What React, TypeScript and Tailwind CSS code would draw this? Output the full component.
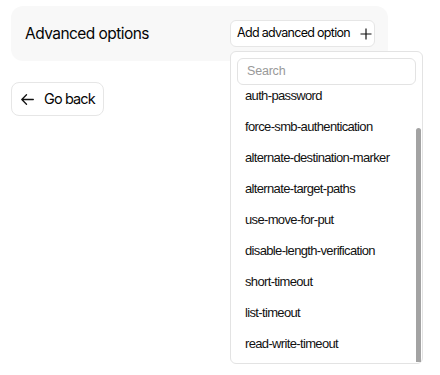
import React from "react";

const items = [
  "auth-password",
  "force-smb-authentication",
  "alternate-destination-marker",
  "alternate-target-paths",
  "use-move-for-put",
  "disable-length-verification",
  "short-timeout",
  "list-timeout",
  "read-write-timeout",
];

export default function App() {
  return (
    <div className="w-[440px] h-[375px] bg-white relative" style={{ fontFamily: "Inter, 'Liberation Sans', sans-serif" }}>
      <div className="pt-[6px] pl-[11px]">
        <div className="w-[377px] h-[55px] rounded-xl bg-[#f8f8f8] flex items-center justify-between pl-[14px] pr-[13px]">
          <span className="text-[15.5px] text-[#050505] tracking-[-0.55px] pt-[1px]">Advanced options</span>
          <div className="relative">
            <button className="w-[145px] h-[27px] flex items-center pl-[6px] bg-white border border-[#e6e6e6] rounded-md text-[12.5px] text-[#050505] tracking-[-0.7px]">
              <span>Add advanced option</span>
              <svg className="ml-[10px]" width="12" height="12" viewBox="0 0 12 12" fill="none" stroke="#111" strokeWidth="1.2">
                <path d="M6 0.5V11.5M0.5 6H11.5" />
              </svg>
            </button>
            <div className="absolute left-0 top-[31px] w-[193px] h-[313px] bg-white border border-[#e3e3e3] rounded-md z-10 flex flex-col" style={{ fontFamily: "'Liberation Sans', Arial, sans-serif" }}>
              <div className="pt-[6px] px-[6px]">
                <div className="h-[27px] border border-[#e3e3e3] rounded-md flex items-center pl-[9px] text-[12.5px] tracking-[-0.2px] text-[#999]">Search</div>
              </div>
              <div className="relative flex-1 overflow-hidden">
                <div className="-mt-[5px]">
                  {items.map((it) => (
                    <div key={it} className="h-[31px] flex items-center pl-[14px] text-[13px] tracking-[-0.65px] text-[#111]">
                      {it}
                    </div>
                  ))}
                </div>
                <div className="absolute right-[1px] top-[43px] bottom-[1px] w-[5px] bg-[#a3a3a3] rounded-t-sm" />
              </div>
            </div>
          </div>
        </div>
      </div>
      <div className="pl-[11px] pt-[21px]">
        <button className="h-[34px] flex items-center gap-[10px] pl-[9px] pr-[8px] bg-white border border-[#e6e6e6] rounded-lg text-[14.5px] text-[#050505] tracking-[-0.9px]">
          <svg width="13" height="11" viewBox="0 0 13 11" fill="none" stroke="#111" strokeWidth="1.3" strokeLinecap="round" strokeLinejoin="round">
            <path d="M12.3 5.5H0.8M5.5 0.8L0.8 5.5L5.5 10.2" />
          </svg>
          <span>Go back</span>
        </button>
      </div>
    </div>
  );
}
